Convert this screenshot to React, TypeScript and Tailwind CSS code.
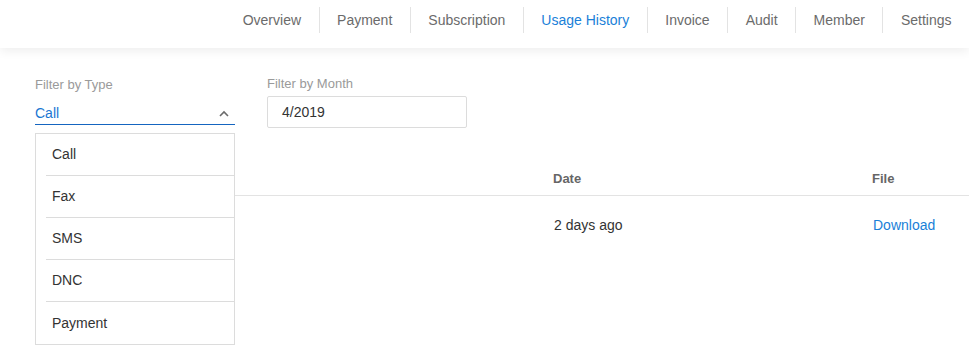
import React from "react";

const tabs = ["Overview", "Payment", "Subscription", "Usage History", "Invoice", "Audit", "Member", "Settings"];
const options = ["Call", "Fax", "SMS", "DNC", "Payment"];

export default function App() {
  return (
    <div className="min-h-[362px] bg-white font-['Liberation_Sans',Arial,sans-serif]">
      <header className="relative z-10 h-[48px] bg-white shadow-[0_3px_10px_rgba(0,0,0,0.07)] flex justify-end items-start pt-[7px]">
        {tabs.map((t, i) => (
          <div
            key={t}
            className={
              "h-[26px] flex items-center px-[17.5px] text-[14px] " +
              (i > 0 ? "border-l border-[#e3e3e3] " : "") +
              (t === "Usage History" ? "text-[#1a7fd8]" : "text-[#6b6b6b]")
            }
          >
            {t}
          </div>
        ))}
      </header>
      <main className="pl-[35px]">
        <div className="flex items-start gap-[32px] pt-[28px]">
          <div className="relative w-[200px] mt-px">
            <div className="h-[16px] leading-[16px] text-[13px] text-[#9a9a9a]">Filter by Type</div>
            <div className="mt-[8px] h-[24px] flex items-center justify-between border-b border-[#1565c0] pr-[6px] pt-[1px]">
              <span className="text-[14px] text-[#1976d2]">Call</span>
              <svg width="10" height="7" viewBox="0 0 10 7" fill="none">
                <polyline points="1,6 5,2 9,6" stroke="#6b6b6b" strokeWidth="1.6" />
              </svg>
            </div>
            <div className="absolute left-0 top-full mt-[8px] w-[200px] border border-[#dcdcdc] bg-white z-20">
              {options.map((o, i) => (
                <div
                  key={o}
                  className={
                    "ml-[10px] h-[42px] flex items-center pl-[6px] text-[14px] text-[#333] " +
                    (i < options.length - 1 ? "border-b border-[#dcdcdc]" : "")
                  }
                >
                  {o}
                </div>
              ))}
            </div>
          </div>
          <div className="w-[200px]">
            <div className="h-[16px] leading-[16px] text-[13px] text-[#9a9a9a]">Filter by Month</div>
            <div className="mt-[4px] h-[32px] border border-[#dcdcdc] rounded-[2px] flex items-center pl-[14px] text-[14px] text-[#333]">
              4/2019
            </div>
          </div>
        </div>
        <div className="mt-[34px]">
          <div className="h-[34px] flex items-center border-b border-[#e3e3e3] text-[13px] font-bold text-[#666]">
            <div className="w-[518px]" />
            <div className="w-[319px]">Date</div>
            <div>File</div>
          </div>
          <div className="h-[58px] flex items-center text-[14px]">
            <div className="w-[519px]" />
            <div className="w-[319px] text-[#333]">2 days ago</div>
            <div className="text-[#1a7fd8]">Download</div>
          </div>
        </div>
      </main>
    </div>
  );
}
